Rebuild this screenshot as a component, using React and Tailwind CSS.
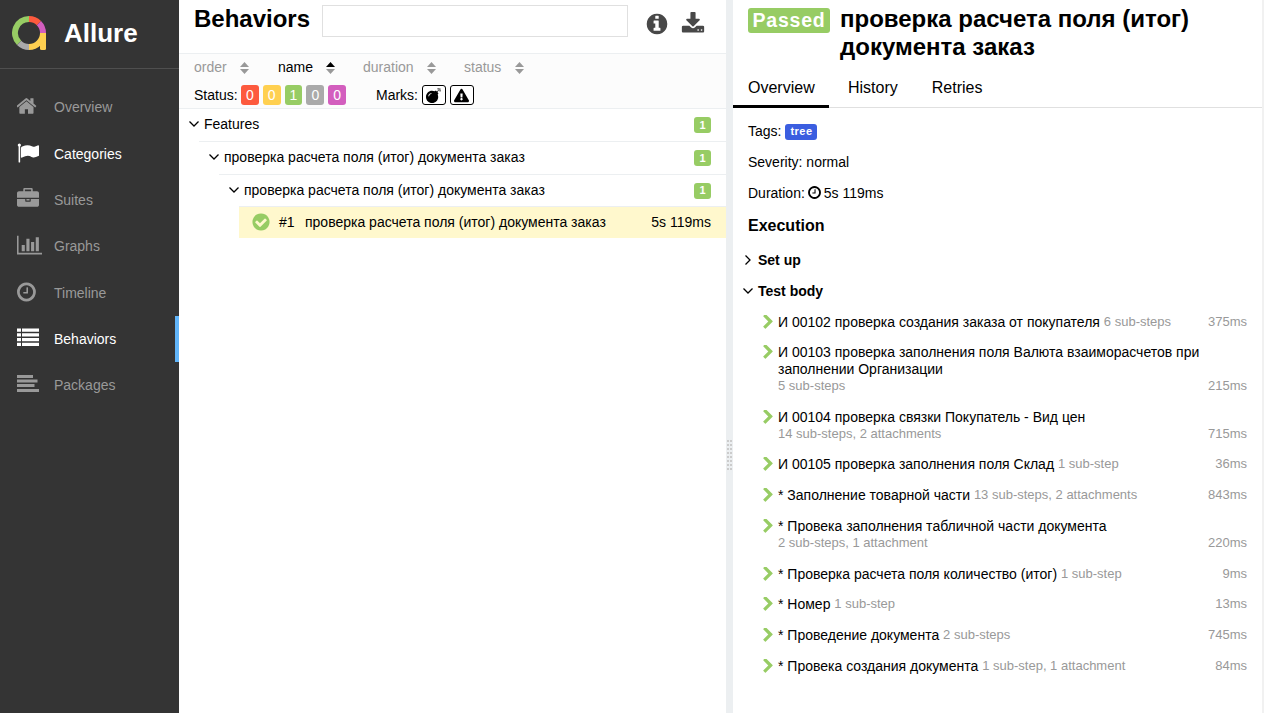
import React from "react";
import { FaBomb, FaExclamationTriangle } from "react-icons/fa";

const RING =
  "q0 209-103 385.5t-279.5 279.5-385.5 103-385.5-103-279.5-279.5-103-385.5 103-385.5 279.5-279.5 385.5-103 385.5 103 279.5 279.5 103 385.5z";

const paths = {
  home: "M1472 992v480q0 26-19 45t-45 19h-384v-384h-256v384h-384q-26 0-45-19t-19-45v-480q0-1 .5-3t.5-3l575-474 575 474q1 2 1 6zm223-69l-62 74q-8 9-21 11h-3q-13 0-21-7l-692-577-692 577q-12 8-24 7-13-2-21-11l-62-74q-8-10-7-23.5t11-21.5l719-599q32-26 76-26t76 26l244 204v-195q0-14 9-23t23-9h192q14 0 23 9t9 23v408l219 182q10 8 11 21.5t-7 23.5z",
  flag: "M320 256q0 72-64 110v1266q0 13-9.5 22.5t-22.5 9.5h-64q-13 0-22.5-9.5t-9.5-22.5v-1266q-64-38-64-110 0-53 37.5-90.5t90.5-37.5 90.5 37.5 37.5 90.5zm1472 64v763q0 25-12.5 38.5t-39.5 27.5q-215 116-369 116-61 0-123.5-22t-108.5-48-115.5-48-142.5-22q-192 0-464 146-17 9-33 9-26 0-45-19t-19-45v-742q0-32 31-55 21-14 79-43 236-120 421-120 107 0 200 29t219 88q38 19 88 19 54 0 117.5-21t110-47 88-47 54.5-21q26 0 45 19t19 45z",
  briefcase:
    "M640 256h512v-128h-512v128zm1152 640v480q0 66-47 113t-113 47h-1472q-66 0-113-47t-47-113v-480h672v160q0 26 19 45t45 19h320q26 0 45-19t19-45v-160h672zm-768 0v128h-256v-128h256zm768-480v384h-1792v-384q0-66 47-113t113-47h352v-160q0-40 28-68t68-28h576q40 0 68 28t28 68v160h352q66 0 113 47t47 113z",
  chart:
    "M640 896v512h-256v-512h256zm384-512v1024h-256v-1024h256zm1024 1152v128h-2048v-1536h128v1408h1920zm-640-896v768h-256v-768h256zm384-384v1152h-256v-1152h256z",
  clock:
    "M1024 544v448q0 14-9 23t-23 9h-320q-14 0-23-9t-9-23v-64q0-14 9-23t23-9h224v-352q0-14 9-23t23-9h64q14 0 23 9t9 23zm416 352q0-148-73-273t-198-198-273-73-273 73-198 198-73 273 73 273 198 198 273 73 273-73 198-198 73-273zm224 0" + RING,
  list: "M0 128h326v260h-326zM408 128h1384v260h-1384zM0 512h326v260h-326zM408 512h1384v260h-1384zM0 896h326v260h-326zM408 896h1384v260h-1384zM0 1280h326v260h-326zM408 1280h1384v260h-1384z",
  align: "M0 163h1304v244h-1304zM0 530h1670v244h-1670zM0 896h1426v244h-1426zM0 1300h1792v244h-1792z",
  info: "M1152 1376v-160q0-14-9-23t-23-9h-96v-512q0-14-9-23t-23-9h-320q-14 0-23 9t-9 23v160q0 14 9 23t23 9h96v320h-96q-14 0-23 9t-9 23v160q0 14 9 23t23 9h448q14 0 23-9t9-23zm-128-896v-160q0-14-9-23t-23-9h-192q-14 0-23 9t-9 23v160q0 14 9 23t23 9h192q14 0 23-9t9-23zm640 416" + RING,
  download:
    "M1344 1344q0-26-19-45t-45-19-45 19-19 45 19 45 45 19 45-19 19-45zm256 0q0-26-19-45t-45-19-45 19-19 45 19 45 45 19 45-19 19-45zm128-224v320q0 40-28 68t-68 28h-1472q-40 0-68-28t-28-68v-320q0-40 28-68t68-28h465l135 136q58 56 136 56t136-56l136-136h464q40 0 68 28t28 68zm-325-569q17 41-14 70l-448 448q-18 19-45 19t-45-19l-448-448q-31-29-14-70 17-39 59-39h256v-448q0-26 19-45t45-19h256q26 0 45 19t19 45v448h256q42 0 59 39z",
  right:
    "M1363 877l-742 742q-19 19-45 19t-45-19l-166-166q-19-19-19-45t19-45l531-531-531-531q-19-19-19-45t19-45l166-166q19-19 45-19t45 19l742 742q19 19 19 45t-19 45z",
  check:
    "M1412 734q0-28-18-46l-91-90q-19-19-45-19t-45 19l-408 407-226-226q-19-19-45-19t-45 19l-91 90q-18 18-18 46 0 27 18 45l362 362q19 19 45 19 27 0 46-19l543-543q18-18 18-45zm252 162" + RING,
};

function Icon({ name, box = "0 0 1792 1792", className = "" }) {
  return (
    <svg viewBox={box} fill="currentColor" className={`shrink-0 ${className}`}>
      <path d={paths[name]} />
    </svg>
  );
}

function Chevron({ className = "" }) {
  return (
    <svg viewBox="0 0 10 6" fill="none" stroke="currentColor" strokeWidth="1.3" className={`h-[6px] w-[10px] shrink-0 ${className}`}>
      <path d="M.5.5 5 5 9.5.5" />
    </svg>
  );
}

function Logo() {
  return (
    <svg viewBox="0 0 34 34" className="h-[34px] w-[34px] shrink-0">
      <g fill="none" strokeWidth="6">
        <path d="M7.1 26.9A14 14 0 0 1 17 3" stroke="#97cc64" />
        <path d="M17 3A14 14 0 0 1 26.9 7.1" stroke="#fd5a3e" />
        <path d="M26.9 7.1A14 14 0 0 1 31 17" stroke="#d35ebe" />
        <path d="M17 31A14 14 0 0 1 7.1 26.9" stroke="#aaa" />
        <path d="M31 17A14 14 0 0 1 17 31" stroke="#ffd050" />
      </g>
      <path d="M28 17h6v15.500a1.500 1.500 0 0 1-1.500 1.500H29.500a1.500 1.500 0 0 1-1.500-1.500z" fill="#ffd050" />
    </svg>
  );
}

const nav = [
  { label: "Overview", icon: "home" },
  { label: "Categories", icon: "flag", lit: true },
  { label: "Suites", icon: "briefcase" },
  { label: "Graphs", icon: "chart", wide: true },
  { label: "Timeline", icon: "clock" },
  { label: "Behaviors", icon: "list", lit: true, active: true },
  { label: "Packages", icon: "align" },
];

function Sidebar() {
  return (
    <aside className="flex w-[179px] shrink-0 flex-col bg-[#343434]">
      <div className="flex h-[69px] items-center gap-[18px] border-b border-[#4f4f4f] pb-[2px] pl-3">
        <Logo />
        <span className="text-[26px] leading-8 font-bold text-white">Allure</span>
      </div>
      <nav className="flex flex-col pt-[15.1px]">
        {nav.map((n) => (
          <a
            key={n.label}
            className={`flex h-[46.33px] items-center pl-[17px] ${n.lit ? "text-white" : "text-[#999]"} ${
              n.active ? "border-r-4 border-[#61b5fa]" : ""
            }`}
          >
            <span className="-mt-[2px] w-[37px]">
              <Icon
                name={n.icon}
                box={n.wide ? "0 0 2048 1792" : n.icon === "home" || n.icon === "clock" ? "128 0 1792 1792" : undefined}
                className={n.wide ? "h-[22px] w-[25px]" : "h-[22px] w-[22px]"}
              />
            </span>
            <span>{n.label}</span>
          </a>
        ))}
      </nav>
    </aside>
  );
}

function Sorter({ label, asc, className }) {
  return (
    <span className={`flex items-center justify-between ${asc ? "text-black" : "text-[#999]"} ${className}`}>
      <span className="-mt-[2px]">{label}</span>
      <svg viewBox="0 0 9 12" className="h-3 w-[9px]">
        <path d="M4.500 0 9 5H0z" fill={asc ? "#000" : "#999"} />
        <path d="M4.500 12 9 7H0z" fill="#999" />
      </svg>
    </span>
  );
}

const statuses = [
  ["0", "bg-[#fd5a3e]"],
  ["0", "bg-[#ffd050]"],
  ["1", "bg-[#97cc64]"],
  ["0", "bg-[#aaa]"],
  ["0", "bg-[#d35ebe]"],
];

const TITLE = "проверка расчета поля (итог) документа заказ";

const groups = [
  { text: "Features", cls: "ml-0 h-8", pad: "pb-[3px]" },
  { text: TITLE, cls: "ml-5 h-[33px] border-t", pad: "pb-[3px]" },
  { text: TITLE, cls: "ml-10 h-8 border-t", pad: "pb-px" },
];

function Tree() {
  return (
    <section className="flex w-[547px] shrink-0 flex-col">
      <div className="flex h-[53px] pl-[15px]">
        <h1 className="w-[128px] pt-[3px] text-2xl leading-8 font-bold">Behaviors</h1>
        <input className="mt-[5px] h-8 w-[306px] border border-[#e0e0e0] outline-none" />
        <Icon name="info" className="mt-3 ml-[17px] h-6 w-6 text-[#484848]" />
        <Icon name="download" className="mt-3 ml-3 h-6 w-6 text-[#484848]" />
      </div>
      <div className="h-14 border-y border-[#eceff1] bg-[#fcfcfc] pl-[15px]">
        <div className="flex h-[27px] items-center">
          <Sorter label="order" className="w-[55px]" />
          <Sorter label="name" asc className="ml-[29px] w-[57px]" />
          <Sorter label="duration" className="ml-7 w-[73px]" />
          <Sorter label="status" className="ml-7 w-[60px]" />
        </div>
        <div className="flex h-[27px] items-center pt-px">
          <span className="w-[47px]">Status:</span>
          <span className="flex gap-1">
            {statuses.map(([n, bg], i) => (
              <span key={i} className={`flex h-5 w-[17.800px] items-center justify-center rounded-[3px] text-white ${bg}`}>
                {n}
              </span>
            ))}
          </span>
          <span className="ml-[30px] w-[46px]">Marks:</span>
          <span className="mr-1 flex h-5 w-6 items-center justify-center rounded-[3px] border border-black bg-white">
            <FaBomb size={15} />
          </span>
          <span className="flex h-5 w-6 items-center justify-center rounded-[3px] border border-black bg-white">
            <FaExclamationTriangle size={15} />
          </span>
        </div>
      </div>
      {groups.map((g, i) => (
        <div key={i} className={`flex items-center border-[#eceff1] pr-[15px] ${g.cls}`}>
          <Chevron className="-mt-[2px] ml-[10px]" />
          <span className={`ml-[5px] flex-1 ${g.pad}`}>{g.text}</span>
          <span className="flex h-4 w-[17px] items-center justify-center rounded-[3px] bg-[#97cc64] text-[11px] leading-none font-bold text-white">1</span>
        </div>
      ))}
      <div className="ml-[60px] flex h-8 items-center border-t border-[#eceff1] bg-[#fff8cd] pr-[15px] pb-px pl-3">
        <Icon name="check" className="h-[20px] w-[20px] text-[#97cc64]" />
        <span className="ml-2 w-[26px]">#1</span>
        <span className="flex-1">{TITLE}</span>
        <span>5s 119ms</span>
      </div>
    </section>
  );
}

const steps = [
  ["И 00102 проверка создания заказа от покупателя", "6 sub-steps", "375ms"],
  ["И 00103 проверка заполнения поля Валюта взаиморасчетов при заполнении Организации", "5 sub-steps", "215ms", true],
  ["И 00104 проверка связки Покупатель - Вид цен", "14 sub-steps, 2 attachments", "715ms", true],
  ["И 00105 проверка заполнения поля Склад", "1 sub-step", "36ms"],
  ["* Заполнение товарной части", "13 sub-steps, 2 attachments", "843ms"],
  ["* Провека заполнения табличной части документа", "2 sub-steps, 1 attachment", "220ms", true],
  ["* Проверка расчета поля количество (итог)", "1 sub-step", "9ms"],
  ["* Номер", "1 sub-step", "13ms"],
  ["* Проведение документа", "2 sub-steps", "745ms"],
  ["* Провека создания документа", "1 sub-step, 1 attachment", "84ms"],
];

function Step({ title, meta, time, stacked }) {
  return (
    <li className="flex py-[7px] leading-[16.800px]">
      <Icon name="right" box="320 128 1088 1536" className="mt-px h-[14px] w-[10px] text-[#97cc64]" />
      <div className="ml-[5px] w-[430px]">
        {title} <span className={`text-[13px] text-[#999] ${stacked ? "block" : "align-[1px] leading-3"}`}>{meta}</span>
      </div>
      <span className="flex-1 self-end text-right text-[13px] text-[#999]">{time}</span>
    </li>
  );
}

function Details() {
  return (
    <section className="flex w-[529px] shrink-0 flex-col">
      <header className="flex h-[68px] pl-[15px]">
        <span className="mt-2 flex h-[25px] w-[82px] items-center justify-center rounded-[3px] bg-[#97cc64] text-[19.500px] leading-none font-bold tracking-[.8px] text-white">
          Passed
        </span>
        <h2 className="ml-[10px] w-[380px] pt-[5px] text-2xl leading-7 font-bold">{TITLE}</h2>
      </header>
      <div className="flex h-10 border-b border-[#e0e0e0] text-base">
        <span className="-mb-px w-24 border-b-3 border-black pt-2 pl-[15px] leading-6">Overview</span>
        <span className="ml-[19px] pt-2 leading-6">History</span>
        <span className="ml-[34px] pt-2 leading-6">Retries</span>
      </div>
      <div className="flex flex-col pt-[7px] pl-[15px]">
        <div className="flex h-[31px] items-center">
          Tags:
          <span className="mt-[2px] ml-1 flex h-4 w-8 items-center justify-center rounded-[3px] bg-[#3b5ee0] text-[11px] leading-none font-bold tracking-[.5px] text-white">
            tree
          </span>
        </div>
        <div className="flex h-[31px] items-center">Severity: normal</div>
        <div className="flex h-[31px] items-center">
          Duration:
          <Icon name="clock" className="mr-[2px] ml-[2px] h-[15px] w-[15px]" />
          5s 119ms
        </div>
        <h3 className="flex h-[35px] items-center text-base font-bold">Execution</h3>
      </div>
      <div className="flex h-[31px] items-center pt-[3px] pl-[10px] font-bold">
        <Chevron className="-rotate-90" />
        <span className="ml-[5px]">Set up</span>
      </div>
      <div className="flex h-[31px] items-center pt-[3px] pl-[10px] font-bold">
        <Chevron />
        <span className="ml-[5px]">Test body</span>
      </div>
      <ul className="pt-[1.600px] pr-[15px] pl-[30px]">
        {steps.map(([title, meta, time, stacked]) => (
          <Step key={title} title={title} meta={meta} time={time} stacked={stacked} />
        ))}
      </ul>
    </section>
  );
}

export default function App() {
  return (
    <div className="flex h-[713px] w-[1264px] overflow-hidden bg-white font-['Liberation_Sans',Arial,sans-serif] text-[14px] leading-5 text-black">
      <Sidebar />
      <Tree />
      <div className="flex w-[7px] shrink-0 justify-center bg-[#eceff1] pt-[440px]">
        <div className="grid h-[30px] grid-cols-2 gap-x-px gap-y-[2px]">
          {Array.from({ length: 16 }, (_, i) => (
            <i key={i} className="h-[2px] w-[2px] bg-[#ccc]" />
          ))}
        </div>
      </div>
      <Details />
      <div className="w-[2px] shrink-0 bg-[#f1f1f1]" />
    </div>
  );
}
